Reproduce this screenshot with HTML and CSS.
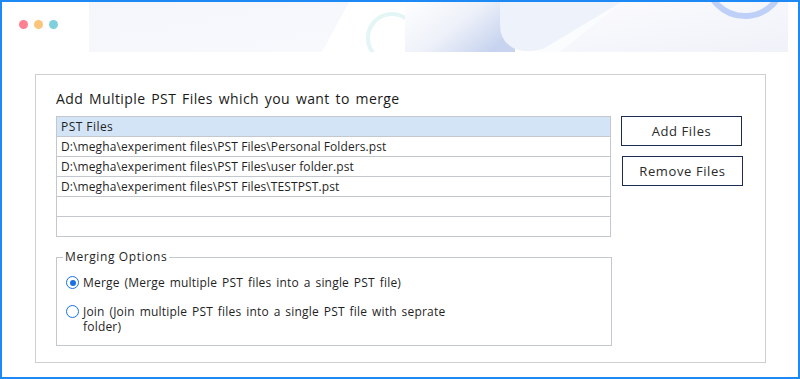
FILE: index.html
```html
<!DOCTYPE html>
<html lang="en">
<head>
<meta charset="utf-8">
<title>Merge PST</title>
<link rel="stylesheet" href="styles.css">
</head>
<body>
<div class="frame">
  <header class="topbar">
    <svg class="deco" width="796" height="50" viewBox="2 2 796 50" aria-hidden="true">
      <defs>
        <linearGradient id="gPar" x1="0" y1="0" x2="1" y2="1">
          <stop offset="0" stop-color="#f5f6fb"/>
          <stop offset="1" stop-color="#f8f9fd"/>
        </linearGradient>
        <linearGradient id="gMid" x1="0" y1="0" x2="1" y2="0.6">
          <stop offset="0" stop-color="#ffffff"/>
          <stop offset="0.55" stop-color="#eef1f9"/>
          <stop offset="1" stop-color="#c8d4ef"/>
        </linearGradient>
        <linearGradient id="gRight" x1="0" y1="0" x2="1" y2="1">
          <stop offset="0" stop-color="#fcfcfe"/>
          <stop offset="1" stop-color="#f0f2f9"/>
        </linearGradient>
      </defs>
      <polygon points="89,0 350,0 322,52 89,52" fill="url(#gPar)"/>
      <circle cx="392" cy="38" r="24" fill="none" stroke="#e3f5f4" stroke-width="4"/>
      <rect x="405" y="0" width="110" height="52" fill="url(#gMid)"/>
      <rect x="540" y="0" width="248" height="52" fill="url(#gRight)"/>
      <path d="M500 0 L625 0 L548 46 Q534 54 518 50 Q500 44 500 25 Z" fill="#eef2fb"/>
      <path d="M625 0 L548 46 Q540 52 530 52 L560 52 Z" fill="#fbfcfe"/>
      <circle cx="745" cy="-23" r="39" fill="none" stroke="#bed0f7" stroke-width="6"/>
    </svg>
    <div class="dots">
      <span class="dot dot-red"></span>
      <span class="dot dot-orange"></span>
      <span class="dot dot-teal"></span>
    </div>
  </header>

  <main class="panel">
    <h1 class="title">Add Multiple PST Files which you want to merge</h1>
    <div class="content">
      <div class="left">
        <div class="table">
          <div class="row head">PST Files</div>
          <div class="row">D:\megha\experiment files\PST Files\Personal Folders.pst</div>
          <div class="row">D:\megha\experiment files\PST Files\user folder.pst</div>
          <div class="row">D:\megha\experiment files\PST Files\TESTPST.pst</div>
          <div class="row"></div>
          <div class="row"></div>
        </div>
        <fieldset class="options">
          <legend>Merging Options</legend>
          <label class="opt">
            <span class="radio checked"></span>
            <span class="opt-text">Merge (Merge multiple PST files into a single PST file)</span>
          </label>
          <label class="opt">
            <span class="radio"></span>
            <span class="opt-text">Join (Join multiple PST files into a single PST file with seprate folder)</span>
          </label>
        </fieldset>
      </div>
      <div class="buttons">
        <button class="btn">Add Files</button>
        <button class="btn btn-remove">Remove Files</button>
      </div>
    </div>
  </main>
</div>
</body>
</html>
```

FILE: styles.css
```css
* { box-sizing: border-box; }
html, body { margin: 0; padding: 0; background: #ffffff; }
body { font-family: "Open Sans", "DejaVu Sans", sans-serif; color: #1f1f1f; }

.frame {
  width: 800px;
  height: 379px;
  border: 2px solid #1c89f4;
  background: #ffffff;
  overflow: hidden;
}

.topbar {
  position: relative;
  height: 50px;
  display: flex;
  align-items: flex-start;
  padding: 18px 0 0 17px;
}
.deco { position: absolute; left: 0; top: 0; }

.dots { position: relative; display: flex; gap: 6px; }
.dot { width: 9px; height: 9px; border-radius: 50%; display: block; }
.dot-red { background: #fe8091; }
.dot-orange { background: #fdc57b; }
.dot-teal { background: #80cfdc; }

.panel {
  margin: 22px 0 0 33px;
  width: 731px;
  height: 289px;
  border: 1px solid #cfcfcf;
  padding: 15px 0 0 20px;
}

.title {
  margin: 0 0 8px;
  font-size: 14px;
  line-height: 18px;
  font-weight: 400;
  letter-spacing: 0.4px;
  word-spacing: 1.8px;
  color: #1a1a1a;
}

.content { display: flex; align-items: flex-start; }
.left { width: 555px; }

.table { border: 1px solid #c3c8cf; }
.row {
  height: 20px;
  line-height: 19px;
  padding-left: 4px;
  border-bottom: 1px solid #c3c8cf;
  font-size: 12px;
  letter-spacing: 0.1px;
  color: #1f1f1f;
  white-space: nowrap;
}
.row:last-child { border-bottom: none; height: 19px; }
.row.head { background: #d4e4f7; letter-spacing: 0.45px; }

.options {
  margin: 12px -1px 0 0;
  height: 97px;
  border: 1px solid #c3c8cf;
  padding: 10px 0 0 9px;
}
.options legend {
  margin-left: -3px;
  padding: 0 2px;
  font-size: 12px;
  line-height: 16px;
  letter-spacing: 0.6px;
  color: #1f1f1f;
}

.opt {
  display: flex;
  align-items: flex-start;
  gap: 4px;
  font-size: 12px;
  line-height: 15px;
  letter-spacing: 0.2px;
  word-spacing: 1.5px;
  margin-bottom: 14px;
}
.opt-text { max-width: 372px; }
.radio {
  flex: none;
  width: 13px;
  height: 13px;
  margin-top: 1px;
  border: 1.5px solid #1a6fe3;
  border-radius: 50%;
  display: flex;
  align-items: center;
  justify-content: center;
  background: #ffffff;
}
.radio.checked::after {
  content: "";
  width: 6px;
  height: 6px;
  border-radius: 50%;
  background: #1a6fe3;
}

.buttons {
  margin-left: 10px;
  display: flex;
  flex-direction: column;
  gap: 10px;
}
.btn {
  width: 121px;
  height: 30px;
  border: 1px solid #1d2a52;
  background: #ffffff;
  font-family: inherit;
  font-size: 13px;
  letter-spacing: 0.6px;
  color: #2a2a2a;
  padding: 0;
  cursor: pointer;
}
.btn-remove { margin-left: 1px; }
```
